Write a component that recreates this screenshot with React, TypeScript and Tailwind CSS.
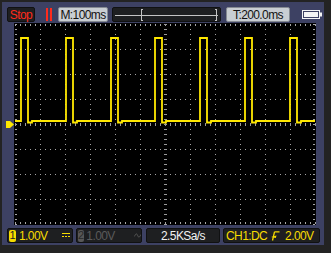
import React from "react";

const FONT = { fontFamily: '"Liberation Sans", Arial, sans-serif' };

function Grid() {
  const pulses = [21, 66, 111, 155, 200, 245, 290];
  let d = "M15 121";
  for (const s of pulses) {
    d += ` L${s} 121 L${s} 38 L${s + 7} 38 L${s + 7} 122.5 L${s + 11} 122.5 L${s + 11} 121`;
  }
  d += " L315 121";
  const vx = [1, 2, 3, 4, 5, 7, 8, 9, 10, 11].map((k) => 15 + 25 * k);
  const hy = [1, 2, 3, 5, 6, 7].map((k) => 24 + 25 * k);
  return (
    <svg width={302} height={202} viewBox="14 23 302 202" className="block bg-black" shapeRendering="crispEdges">
      {vx.map((x) => (
        <line key={"v" + x} x1={x + 0.5} y1={24} x2={x + 0.5} y2={224} stroke="#a6a6a6" strokeDasharray="1 4" />
      ))}
      {hy.map((y) => (
        <line key={"h" + y} x1={15} y1={y + 0.5} x2={315} y2={y + 0.5} stroke="#a6a6a6" strokeDasharray="1 4" />
      ))}
      {/* edge ticks */}
      <line x1={15} y1={25} x2={316} y2={25} stroke="#a6a6a6" strokeWidth={2} strokeDasharray="1 4" />
      <line x1={15} y1={223} x2={316} y2={223} stroke="#a6a6a6" strokeWidth={2} strokeDasharray="1 4" />
      <line x1={16} y1={24} x2={16} y2={225} stroke="#a6a6a6" strokeWidth={2} strokeDasharray="1 4" />
      <line x1={314} y1={24} x2={314} y2={225} stroke="#a6a6a6" strokeWidth={2} strokeDasharray="1 4" />
      {/* center cross */}
      <line x1={165.5} y1={24} x2={165.5} y2={225} stroke="#9a9a9a" strokeWidth={3} strokeDasharray="1 4" />
      <line x1={15} y1={124.5} x2={316} y2={124.5} stroke="#9a9a9a" strokeWidth={3} strokeDasharray="1 4" />
      {/* trace */}
      <path d={d} fill="none" stroke="#ffe800" strokeWidth={1.8} strokeLinejoin="miter" shapeRendering="auto" />
    </svg>
  );
}

function Battery() {
  return (
    <svg width={21} height={10} viewBox="0 0 21 10" className="block">
      <rect x={0.5} y={0.5} width={17} height={8} fill="none" stroke="#f4f4f4" />
      <rect x={2} y={2} width={14} height={5} fill="#f4f4f4" />
      <rect x={18} y={2.5} width={2} height={4} fill="#f4f4f4" />
    </svg>
  );
}

const TXT = "text-[12px] tracking-[-0.6px] leading-none";

export default function App() {
  return (
    <div className="w-[331px] h-[253px] bg-[#232323] pt-[2px] pl-[2px] overflow-hidden" style={FONT}>
      <div className="w-[322px] h-[243px] bg-[#3d4163] flex flex-col">
        {/* header */}
        <div className="flex items-center mt-[5px] h-[15px]">
          <div className={`ml-[5px] w-[28px] h-[15px] bg-[#1e1f21] border border-[#101112] rounded-[2px] flex items-center justify-center ${TXT} text-[#ff2b1c]`}>
            Stop
          </div>
          <div className="ml-[11px] flex gap-[2px] h-[13px]">
            <div className="w-[2px] h-[13px] bg-[#ff2b1c]" />
            <div className="w-[2px] h-[13px] bg-[#ff2b1c]" />
          </div>
          <div className={`ml-[6px] w-[50px] h-[15px] bg-[#c9ced3] border border-[#858a92] rounded-[2px] flex items-center justify-center ${TXT} text-[#111]`}>
            M:100ms
          </div>
          <div className="ml-[4px] w-[109px] h-[15px] bg-[#1e1f21] border border-[#101112] rounded-[2px]">
            <svg width={107} height={13} viewBox="1 1 107 13" className="block" shapeRendering="crispEdges">
              <line x1={3} y1={8.5} x2={106} y2={8.5} stroke="#c4c4c4" />
              <path d="M31 2.5 H29.5 V13.5 H31" fill="none" stroke="#c4c4c4" />
              <path d="M103 2.5 H104.5 V13.5 H103" fill="none" stroke="#c4c4c4" />
            </svg>
          </div>
          <div className={`ml-[5px] w-[64px] h-[15px] bg-[#c9ced3] border border-[#858a92] rounded-[2px] flex items-center justify-center ${TXT} text-[#111]`}>
            T:200.0ms
          </div>
          <div className="ml-[12px]">
            <Battery />
          </div>
        </div>

        {/* screen */}
        <div className="flex mt-[1px]">
          <div className="ml-[4px] w-[8px] mt-[98px] self-start">
            <svg width={8} height={7} viewBox="0 0 8 7" className="block">
              <polygon points="0,0 4,0 8,3.5 4,7 0,7" fill="#ffe800" />
            </svg>
          </div>
          <Grid />
        </div>

        {/* footer */}
        <div className="flex mt-[3px] h-[15px]">
          <div className="ml-[5px] w-[66px] h-[15px] bg-[#1e1f21] border border-[#101112] rounded-[2px] flex items-center">
            <div className="ml-[1px] w-[7px] h-[12px] bg-[#f6dc00] rounded-[2px] flex items-center justify-center text-[11px] leading-none text-[#222]">
              1
            </div>
            <span className={`ml-[3px] ${TXT} text-[#f6dc00]`}>1.00V</span>
            <svg width={8} height={5} viewBox="0 0 8 5" className="block ml-[15px]" shapeRendering="crispEdges">
              <line x1={0} y1={0.5} x2={8} y2={0.5} stroke="#f6dc00" />
              <line x1={0} y1={3.5} x2={8} y2={3.5} stroke="#f6dc00" strokeDasharray="1.5 1.5" />
            </svg>
          </div>
          <div className="ml-[3px] w-[66px] h-[15px] bg-[#1e1f21] border border-[#101112] rounded-[2px] flex items-center">
            <div className="ml-[1px] w-[7px] h-[12px] bg-[#575757] rounded-[2px] flex items-center justify-center text-[11px] leading-none text-[#2a2a2a]">
              2
            </div>
            <span className={`ml-[2px] ${TXT} text-[#5a5a5a]`}>1.00V</span>
            <svg width={8} height={5} viewBox="0 0 8 5" className="block ml-[19px]">
              <path d="M0.5 3.5 C2 0 3 0 4 2.5 C5 5 6 5 7.5 1.5" fill="none" stroke="#5e5e5e" strokeWidth={1} />
            </svg>
          </div>
          <div className={`ml-[4px] w-[74px] h-[15px] bg-[#1e1f21] border border-[#101112] rounded-[2px] flex items-center justify-center ${TXT} text-[#f2f2f2]`}>
            2.5KSa/s
          </div>
          <div className={`ml-[3px] w-[97px] h-[15px] bg-[#1e1f21] border border-[#101112] rounded-[2px] flex items-center ${TXT} text-[#f6dc00]`}>
            <span className="ml-[2px]">CH1:DC</span>
            <svg width={10} height={10} viewBox="0 0 10 10" className="block ml-[3px]">
              <path d="M4.5 0.8 H9.5 M4.5 0.8 L2.5 9.5" fill="none" stroke="#f6dc00" strokeWidth={1.3} />
              <polygon points="1,6 6.5,4.5 5.8,7" fill="#f6dc00" />
            </svg>
            <span className="ml-[5px]">2.00V</span>
          </div>
        </div>
      </div>
    </div>
  );
}
